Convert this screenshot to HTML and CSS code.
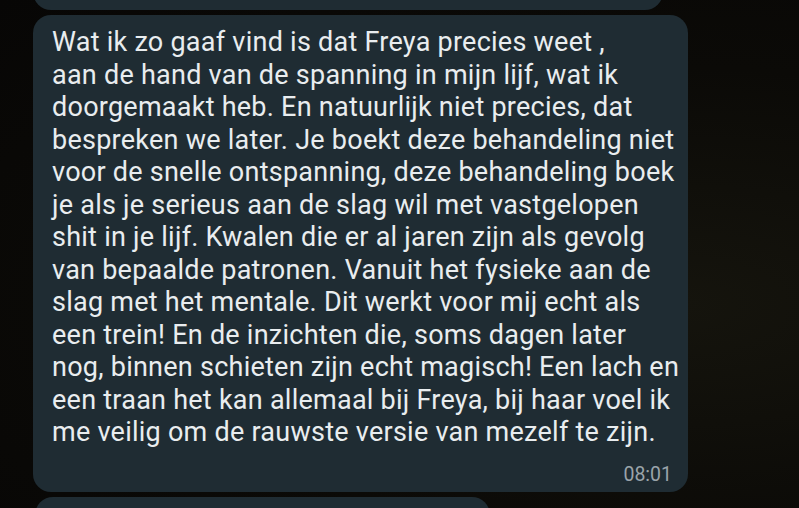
FILE: index.html
```html
<!DOCTYPE html>
<html lang="nl">
<head>
<meta charset="utf-8">
<title>Chat</title>
<link rel="stylesheet" href="styles.css">
</head>
<body>
<div class="chat">
  <div class="bubble bubble-prev"></div>
  <div class="bubble bubble-main">
    <p class="msg">Wat ik zo gaaf vind is dat Freya precies weet ,<br>aan de hand van de spanning in mijn lijf, wat ik<br>doorgemaakt heb. En natuurlijk niet precies, dat<br>bespreken we later. Je boekt deze behandeling niet<br>voor de snelle ontspanning, deze behandeling boek<br>je als je serieus aan de slag wil met vastgelopen<br>shit in je lijf. Kwalen die er al jaren zijn als gevolg<br>van bepaalde patronen. Vanuit het fysieke aan de<br>slag met het mentale. Dit werkt voor mij echt als<br>een trein! En de inzichten die, soms dagen later<br>nog, binnen schieten zijn echt magisch! Een lach en<br>een traan het kan allemaal bij Freya, bij haar voel ik<br>me veilig om de rauwste versie van mezelf te zijn.</p>
    <div class="meta"><span class="time">08:01</span></div>
  </div>
  <div class="bubble bubble-next"></div>
</div>
</body>
</html>
```
FILE: styles.css
```css
html, body {
  margin: 0;
  padding: 0;
  height: 100%;
  overflow: hidden;
}
body {
  background: radial-gradient(ellipse at 85% 60%, #15140d 0%, #0b0a07 55%, #070605 100%);
  font-family: Roboto, "Noto Sans", sans-serif;
}
.chat {
  display: flex;
  flex-direction: column;
  gap: 5px;
  padding-left: 33px;
  margin-top: -40px;
}
.bubble {
  background: #1f2c33;
  border-radius: 18px;
}
.bubble-prev {
  width: 630px;
  height: 50px;
}
.bubble-main {
  width: 655px;
  box-sizing: border-box;
  padding: 11px 16px 6px 19px;
}
.bubble-next {
  width: 455px;
  height: 60px;
  margin-left: 2px;
}
.msg {
  margin: 0;
  color: #e9edef;
  font-size: 27px;
  line-height: 32.5px;
  letter-spacing: 0.25px;
  white-space: nowrap;
}
.meta {
  display: flex;
  justify-content: flex-end;
  margin-top: 14px;
}
.time {
  color: #9aa4aa;
  font-size: 19.5px;
}
```
